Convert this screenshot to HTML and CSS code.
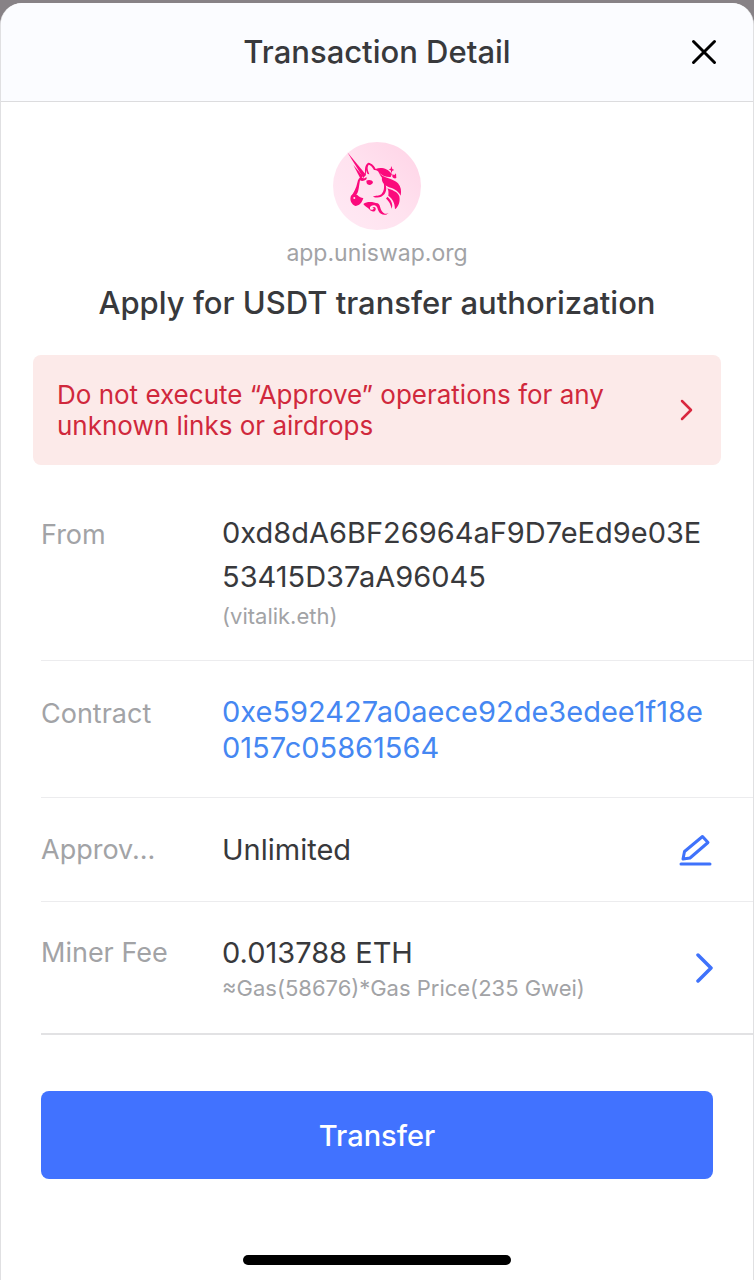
FILE: index.html
```html
<!DOCTYPE html>
<html lang="en">
<head>
<meta charset="utf-8">
<meta name="viewport" content="width=device-width, initial-scale=1">
<title>Transaction Detail</title>
<link rel="stylesheet" href="styles.css">
</head>
<body>
<main class="sheet">
  <header class="sheet-header">
    <h1 class="sheet-title">Transaction Detail</h1>
    <button class="icon-button" type="button" aria-label="Close">
      <svg width="28" height="28" viewBox="0 0 28 28" fill="none" stroke="#000" stroke-width="3" stroke-linecap="round"><path d="M3.500 3.500 24.500 24.500M24.500 3.500 3.500 24.500"/></svg>
    </button>
  </header>

  <section class="dapp">
    <svg class="dapp-logo" viewBox="40 36 264 264" role="img" aria-label="Uniswap">
      <defs><linearGradient id="halo" x1="0" y1="1" x2="1" y2="0"><stop offset="0" stop-color="#ffeaf4"/><stop offset=".5" stop-color="#ffe2ef"/><stop offset="1" stop-color="#ffd3e6"/></linearGradient></defs>
      <circle cx="172" cy="168" r="132" fill="url(#halo)"/>
      <g fill="#fb0a7c">
        <path d="M83 67 139 134 131 144Z"/>
        <path d="M101 105 129 138 123 147Z"/>
        <path d="M124 140C133 147 137 145 140 140L141 147C132 154 126 154 121 151C118 168 117 182 113 190C110 195 106 197 104 202L93 200C101 190 110 174 113 158C115 148 118 143 124 140Z"/>
        <path d="M93 200C98 190 108 190 116 198C124 204 130 204 131 204C127 219 118 227 107 228C96 223 90 211 93 200Z"/>
        <path d="M138 139C133 116 137 103 146 98C158 100 164 109 168 117C182 110 204 114 217 132L213 141C200 142 188 137 178 128C175 122 169 119 163 120C158 110 152 105 147 104C141 113 145 122 149 133L144 132C141 128 141 124 140 120Z"/>
        <path d="M140 152C147 148 158 150 160 156C159 165 146 168 141 160Z"/>
        <path d="M177 126C190 146 223 145 235 160C244 170 246 183 243 197C235 180 219 175 205 170C190 163 185 151 187 143C182 137 179 132 177 126Z"/>
        <path d="M188 144C196 167 195 181 185 193C178 199 167 196 160 200C174 206 186 202 194 193C203 181 202 166 188 144Z"/>
        <path d="M203 175C217 180 234 185 239 199C242 215 237 230 226 238C225 217 219 207 206 197C207 188 207 181 203 175Z"/>
        <path d="M203 200C215 210 221 223 216 236C212 220 207 212 199 206Z"/>
        <path d="M131 222C143 212 162 216 174 220C184 225 180 241 191 248C197 253 203 252 207 249C197 259 182 254 177 244C173 237 174 230 168 227C159 224 149 228 151 236C153 242 163 240 162 234L158 234C162 228 170 231 168 239C166 247 154 246 149 238C145 232 139 233 131 222Z"/>
        <path d="M215 108 218 117 224 120 218 122 215 130 213 121 207 118 213 116Z"/>
        <path d="M218 133 224 135 229 130 230 144C225 147 221 144 218 140Z"/>
      </g>
      <circle cx="104" cy="204" r="3" fill="#ffe2ef"/>
    </svg>
    <p class="dapp-host">app.uniswap.org</p>
    <h2 class="dapp-request">Apply for USDT transfer authorization</h2>
  </section>

  <button class="warning" type="button">
    <span class="warning-text">Do not execute “Approve” operations for any unknown links or airdrops</span>
    <svg width="16" height="22" viewBox="0 0 16 22" fill="none" stroke="#d9283f" stroke-width="2.500" stroke-linecap="round" stroke-linejoin="round"><path d="M4 2 13 11 4 20"/></svg>
  </button>

  <dl class="details">
    <div class="row row-from">
      <dt class="label">From</dt>
      <dd class="value"><span class="address">0xd8dA6BF26964aF9D7eEd9e03E53415D37aA96045</span><span class="note">(vitalik.eth)</span></dd>
    </div>
    <div class="row row-contract">
      <dt class="label">Contract</dt>
      <dd class="value"><a class="contract-link" href="#contract">0xe592427a0aece92de3edee1f18e0157c05861564</a></dd>
    </div>
    <div class="row row-approved">
      <dt class="label">Approv...</dt>
      <dd class="value">Unlimited</dd>
      <dd class="action">
        <button class="icon-button" type="button" aria-label="Edit approved amount">
          <svg width="36" height="36" viewBox="0 0 36 36" fill="none" stroke="#3f72fb" stroke-width="3" stroke-linecap="round" stroke-linejoin="round"><path d="M4 32H33M25.500 4.500 31 10.500 13 26 6 27 7.500 19.500Z"/></svg>
        </button>
      </dd>
    </div>
    <div class="row row-fee">
      <dt class="label">Miner Fee</dt>
      <dd class="value">0.013788 ETH<span class="note">≈Gas(58676)*Gas Price(235 Gwei)</span></dd>
      <dd class="action">
        <button class="icon-button" type="button" aria-label="Change miner fee">
          <svg width="20" height="34" viewBox="0 0 20 34" fill="none" stroke="#3f72fb" stroke-width="3.500" stroke-linecap="round" stroke-linejoin="round"><path d="M5 2 18 15 5 28"/></svg>
        </button>
      </dd>
    </div>
  </dl>

  <footer class="sheet-footer">
    <button class="submit" type="button">Transfer</button>
    <div class="home-indicator"></div>
  </footer>
</main>
</body>
</html>
```

FILE: styles.css
```css
* {
  box-sizing: border-box;
}

body {
  margin: 0;
  padding-top: 3px;
  background: #878286;
  color: #38393c;
  font-family: Inter, "Liberation Sans", sans-serif;
  font-size: 29px;
}

h1, h2, p, dl, dd {
  margin: 0;
}

button {
  font: inherit;
  border: 0;
  cursor: pointer;
}

svg {
  display: block;
  flex: none;
}

.sheet {
  display: flex;
  flex-direction: column;
  min-height: calc(100vh - 3px);
  border: 1px solid #e0e0e2;
  border-width: 0 1px;
  border-radius: 22px 22px 0 0;
  background: #fff;
  overflow: hidden;
}

.sheet-header {
  display: grid;
  grid-template-columns: 28px 1fr 28px;
  align-items: center;
  height: 99px;
  padding: 0 35px;
  border-bottom: 1px solid #dcdcde;
  background: #fbfcff;
}

.sheet-title {
  grid-column: 2;
  font-size: 31px;
  font-weight: 500;
  line-height: 36px;
  text-align: center;
}

.icon-button {
  padding: 0;
  background: none;
}

.dapp {
  display: flex;
  flex-direction: column;
  align-items: center;
  padding: 40px 32px 32px;
  text-align: center;
}

.dapp-logo {
  width: 88px;
  height: 88px;
}

.dapp-host {
  margin-top: 7px;
  color: #a2a3a6;
  font-size: 23px;
  line-height: 32px;
}

.dapp-request {
  margin-top: 14px;
  font-size: 31px;
  font-weight: 500;
  line-height: 40px;
}

.warning {
  display: flex;
  align-items: center;
  justify-content: space-between;
  gap: 24px;
  min-height: 110px;
  margin: 0 32px;
  padding: 24px 27px 24px 24px;
  border-radius: 8px;
  background: #fceae9;
  color: #d0283c;
  font-size: 26px;
  line-height: 31px;
  text-align: left;
}

.details {
  padding-left: 40px;
}

.row {
  display: grid;
  grid-template-columns: 181px 1fr auto;
  padding-right: 40px;
  border-bottom: 1px solid #ececee;
}

.label {
  color: #a2a3a6;
  font-size: 27px;
  line-height: 36px;
}

.value {
  line-height: 36px;
  overflow-wrap: anywhere;
}

.address {
  display: block;
  line-height: 44px;
}

.note {
  display: block;
  color: #a2a3a6;
  font-size: 22px;
  line-height: 34px;
}

.contract-link {
  color: #4587f2;
  text-decoration: none;
}

.row-from {
  padding-top: 46px;
  padding-bottom: 27px;
}

.row-from .label {
  line-height: 48px;
}

.row-contract {
  padding-top: 33px;
  padding-bottom: 31px;
}

.row-contract .label {
  line-height: 40px;
}

.row-approved {
  align-items: center;
  min-height: 104px;
}

.row-fee {
  padding-top: 33px;
  padding-bottom: 28px;
  border-bottom: 2px solid #e2e2e4;
}

.action {
  display: flex;
  align-self: center;
}

.sheet-footer {
  display: flex;
  flex: 1;
  flex-direction: column;
  padding: 56px 40px 15px;
}

.submit {
  height: 88px;
  border-radius: 8px;
  background: #4172ff;
  color: #fff;
  font-size: 29px;
  font-weight: 500;
}

.home-indicator {
  width: 40%;
  height: 10px;
  margin: auto auto 0;
  border-radius: 5px;
  background: #000;
}
```
